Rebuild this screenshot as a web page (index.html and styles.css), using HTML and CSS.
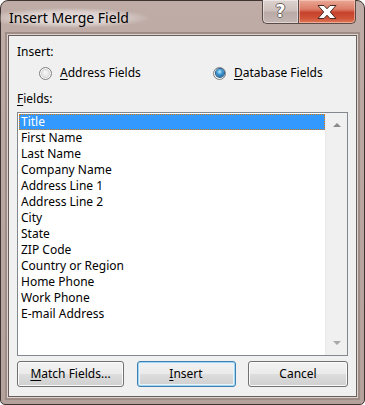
FILE: index.html
```html
<!DOCTYPE html>
<html>
<head>
<meta charset="utf-8">
<link rel="stylesheet" href="styles.css">
</head>
<body>
<div class="window">
  <div class="titlebar">
    <div class="title">Insert Merge Field</div>
    <div class="caption">
      <div class="cap-btn help"><span class="qmark">?</span></div>
      <div class="cap-btn close">
        <svg width="20" height="14" viewBox="0 0 20 14">
          <path d="M1 0.5 H7 L10 3.8 L13 0.5 H19 L13.3 7 L19 13.5 H13 L10 10.2 L7 13.5 H1 L6.7 7 Z" fill="#ffffff" stroke="#4a2a22" stroke-width="1" stroke-linejoin="round"/>
        </svg>
      </div>
    </div>
  </div>
  <div class="client">
    <div class="label">Insert:</div>
    <div class="radios">
      <div class="radio first"><span class="circle"></span><span><u>A</u>ddress Fields</span></div>
      <div class="radio"><span class="circle checked"><span class="pip"></span></span><span><u>D</u>atabase Fields</span></div>
    </div>
    <div class="label fields-label"><u>F</u>ields:</div>
    <div class="listbox">
      <ul class="items">
        <li class="item selected">Title</li>
        <li class="item">First Name</li>
        <li class="item">Last Name</li>
        <li class="item">Company Name</li>
        <li class="item">Address Line 1</li>
        <li class="item">Address Line 2</li>
        <li class="item">City</li>
        <li class="item">State</li>
        <li class="item">ZIP Code</li>
        <li class="item">Country or Region</li>
        <li class="item">Home Phone</li>
        <li class="item">Work Phone</li>
        <li class="item">E-mail Address</li>
      </ul>
      <div class="scrollbar">
        <span class="arrow up"></span>
        <span class="arrow down"></span>
      </div>
    </div>
    <div class="buttons">
      <div class="btn match"><u>M</u>atch Fields...</div>
      <div class="btn insert default"><u>I</u>nsert</div>
      <div class="btn cancel">Cancel</div>
    </div>
  </div>
</div>
</body>
</html>
```
FILE: styles.css
```css
html, body {
  margin: 0;
  padding: 0;
  background: #ffffff;
}
body {
  width: 365px;
  height: 405px;
  font-family: "Noto Sans", "Open Sans", sans-serif;
  font-size: 12px;
  color: #000;
}
.window {
  box-sizing: border-box;
  width: 365px;
  height: 405px;
  border: 1px solid #3e3331;
  border-radius: 8px 8px 5px 5px;
  background: linear-gradient(180deg, #bfaca7 0%, #bba8a3 30%, #b6a29c 100%);
  padding: 0 7px 7px 7px;
  display: flex;
  flex-direction: column;
}
.titlebar {
  height: 34px;
  display: flex;
  justify-content: space-between;
  align-items: flex-start;
}
.title {
  font-size: 14px;
  line-height: 20px;
  margin-top: 7px;
  margin-left: -19px;
  padding: 0 20px;
  color: #000;
  background: radial-gradient(ellipse at center, rgba(236,229,227,0.95) 0%, rgba(228,219,216,0.75) 45%, rgba(200,186,182,0) 72%);
}
.caption {
  display: flex;
  margin-top: -1px;
  margin-right: 1px;
  height: 24px;
}
.cap-btn {
  box-sizing: border-box;
  height: 24px;
  display: flex;
  align-items: center;
  justify-content: center;
  border: 1px solid #5b4a46;
  border-top: none;
}
.help {
  width: 36px;
  border-radius: 0 0 0 5px;
  border-right: none;
  background: linear-gradient(180deg, #ddd3d0 0%, #cdc0bc 45%, #b9aaa6 55%, #c4b7b3 100%);
  box-shadow: inset 0 0 0 1px rgba(255,255,255,0.45);
}
.qmark {
  font-family: "DejaVu Sans", sans-serif;
  font-weight: bold;
  font-size: 17px;
  line-height: 17px;
  color: #ffffff;
  text-shadow: 1px 0 0 #6b6360, -1px 0 0 #6b6360, 0 1px 0 #6b6360, 0 -1px 0 #6b6360;
}
.close {
  width: 58px;
  border-radius: 0 0 5px 0;
  background: linear-gradient(180deg, #e9a896 0%, #dc7d68 40%, #c7412b 55%, #cf5438 80%, #e07a5a 100%);
  box-shadow: inset 0 0 0 1px rgba(255,220,210,0.5);
}
.close svg {
  display: block;
}
.client {
  flex: 1;
  background: #f0f0f0;
  border: 1px solid #6b5d59;
  box-shadow: 0 0 0 1px #ddd4d1, 0 0 0 3px #a08c86;
  padding: 8px 8px 9px 8px;
  display: flex;
  flex-direction: column;
}
.label {
  line-height: 16px;
  height: 16px;
}
.radios {
  display: flex;
  margin-top: 5px;
  padding-left: 22px;
  height: 16px;
  align-items: center;
}
.radio {
  display: flex;
  align-items: center;
  gap: 8px;
  line-height: 16px;
}
.radio.first {
  width: 174px;
}
.circle {
  box-sizing: border-box;
  width: 13px;
  height: 13px;
  border-radius: 50%;
  border: 1px solid #7f8182;
  background: radial-gradient(circle at 50% 40%, #f6f6f6 0%, #e4e4e4 50%, #c8c8c8 100%);
  box-shadow: inset 0 0 0 1px #fafafa, inset 0 0 0 2px #d4d4d4;
  display: flex;
  align-items: center;
  justify-content: center;
}
.pip {
  width: 8px;
  height: 8px;
  border-radius: 50%;
  background: radial-gradient(circle at 45% 35%, #c2eafc 0%, #3c9ad6 40%, #0d4a84 100%);
  box-shadow: 0 0 0 1px #2a5a86;
}
.fields-label {
  margin-top: 10px;
}
.listbox {
  box-sizing: border-box;
  margin-top: 5px;
  height: 244px;
  border: 1px solid #828790;
  background: #ffffff;
  display: flex;
}
.items {
  list-style: none;
  margin: 0;
  padding: 1px 0 0 1px;
  flex: 1;
}
.item {
  box-sizing: border-box;
  height: 16px;
  line-height: 16px;
  padding-left: 2px;
  color: #000;
}
.item.selected {
  background: #3399ff;
  color: #ffffff;
  border: 1px dotted #e07a10;
  padding-left: 1px;
  line-height: 14px;
}
.scrollbar {
  width: 21px;
  background: #f0f0f0;
  border-left: 1px solid #ebebeb;
  display: flex;
  flex-direction: column;
  justify-content: space-between;
  align-items: center;
  padding: 10px 0 10px 0;
}
.arrow {
  width: 0;
  height: 0;
  border-left: 4px solid transparent;
  border-right: 4px solid transparent;
}
.arrow.up {
  border-bottom: 4px solid #8a8a8a;
}
.arrow.down {
  border-top: 4px solid #a8a8a8;
}
.buttons {
  margin-top: 5px;
  display: flex;
  justify-content: space-between;
}
.btn {
  box-sizing: border-box;
  height: 26px;
  border: 1px solid #707070;
  border-radius: 3px;
  background: linear-gradient(180deg, #f2f2f2 0%, #ebebeb 48%, #dddddd 52%, #cfcfcf 100%);
  box-shadow: inset 0 0 0 1px #fbfbfb;
  display: flex;
  align-items: center;
  justify-content: center;
  line-height: 16px;
  padding-bottom: 1px;
}
.match {
  width: 107px;
}
.insert {
  width: 99px;
}
.cancel {
  width: 100px;
}
.btn.default {
  border-color: #3c7fb1;
  box-shadow: inset 0 0 0 1px #a4d6f2, inset 0 0 0 2px #e6f3fa;
}
u {
  text-decoration: underline;
  text-underline-offset: 2px;
}
```
